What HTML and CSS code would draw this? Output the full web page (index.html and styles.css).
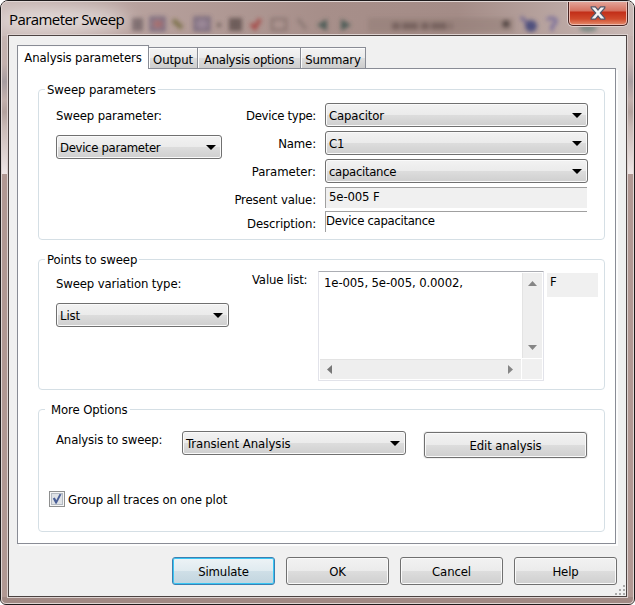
FILE: index.html
```html
<!DOCTYPE html>
<html lang="en">
<head>
<meta charset="utf-8">
<title>Parameter Sweep</title>
<link rel="stylesheet" href="styles.css">
</head>
<body>
<div class="window">
  <svg class="glass" width="633" height="603" viewBox="1 1 633 603" aria-hidden="true">
    <defs>
      <filter id="soft" x="-20%" y="-50%" width="140%" height="200%"><feGaussianBlur stdDeviation="2.300"/></filter>
      <filter id="haze" x="-50%" y="-150%" width="200%" height="400%"><feGaussianBlur stdDeviation="9"/></filter>
      <linearGradient id="bar" x1="0" x2="1" y1="0" y2="0">
        <stop offset="0" stop-color="#c9b9b6"/><stop offset=".2" stop-color="#b8a29e"/><stop offset=".5" stop-color="#a78f8a"/><stop offset=".72" stop-color="#a48c87"/><stop offset=".9" stop-color="#bca9a5"/><stop offset="1" stop-color="#c8b8b5"/>
      </linearGradient>
      <linearGradient id="side" x1="0" x2="0" y1="0" y2="1">
        <stop offset="0" stop-color="#c4b3b0"/><stop offset=".2" stop-color="#c4b1ae"/><stop offset=".33" stop-color="#a79da0"/><stop offset=".46" stop-color="#c3b1ad"/><stop offset=".55" stop-color="#b3a29e"/><stop offset=".66" stop-color="#c9bab6"/><stop offset="1" stop-color="#efe6e6"/>
      </linearGradient>
    </defs>
    <rect width="635" height="605" fill="#b19893"/>
    <rect y="36" width="10" height="138" fill="url(#side)"/>
    <rect x="625" y="36" width="10" height="138" fill="url(#side)"/>
    <rect y="597" width="635" height="8" fill="#a18984"/>
    <rect width="635" height="36" fill="url(#bar)"/>
    <ellipse cx="62" cy="20" rx="68" ry="11" fill="#fff" opacity=".6" filter="url(#haze)"/>
    <g filter="url(#soft)" opacity=".85">
      <rect x="132" y="18" width="11" height="13" fill="#5d5055" opacity=".7"/>
      <rect x="151" y="18" width="13" height="12" fill="#8a7585" stroke="#51466b" stroke-width="3" opacity=".7"/>
      <rect x="154" y="21" width="8" height="6" fill="#a36565"/>
      <path d="M173 20l9 8" stroke="#67612e" stroke-width="5" opacity=".8"/>
      <rect x="195" y="18" width="14" height="12" fill="#8a7b98" stroke="#51466b" stroke-width="3" opacity=".7"/>
      <circle cx="219" cy="25" r="2" fill="#574744"/>
      <rect x="229" y="18" width="13" height="13" fill="#564844" opacity=".85"/>
      <path d="M251 24l4 4 5-9" fill="none" stroke="#a6423f" stroke-width="4"/>
      <rect x="272" y="19" width="14" height="11" fill="none" stroke="#7d6b66" stroke-width="2"/>
      <path d="M298 19l8 10" stroke="#85736f" stroke-width="3"/>
      <path d="M317 25l10-6v12z" fill="#3f5550"/>
      <path d="M351 25l-10-6v12z" fill="#3f5550"/>
      <rect x="368" y="18" width="146" height="14" fill="#8d7771" opacity=".5"/>
      <path d="M392 26h60" stroke="#5c4b48" stroke-width="7" stroke-dasharray="8 2 16 3" opacity=".7"/>
      <circle cx="506" cy="24" r="4" fill="#4a3d3b"/>
      <path d="M521 17l8 8" stroke="#5c5590" stroke-width="3"/>
      <circle cx="531" cy="26" r="6" fill="#3d4279"/>
      <path d="M547 20q4-4 9 0q0 4-4 6v5" fill="none" stroke="#69609a" stroke-width="3"/>
      <ellipse cx="588" cy="28" rx="9" ry="4" fill="#738580"/>
    </g>
  </svg>
  <header class="titlebar">
    <h1>Parameter Sweep</h1>
    <button class="close" aria-label="Close">
      <svg width="16" height="14" viewBox="0 0 16 14"><path d="M1.200.9h4.200L8 4l2.600-3.100h4.200v1L10.300 7l4.500 5.100v1h-4.200L8 10l-2.600 3.100H1.200v-1L5.700 7 1.200 1.900z" fill="#f4f4f4" stroke="#545a6c" stroke-width="1.200"/></svg>
    </button>
  </header>
  <main class="client">
    <nav class="tabs">
      <a class="tab active"><span>Analysis parameters</span></a>
      <a class="tab output"><span>Output</span></a>
      <a class="tab options"><span class="tight">Analysis options</span></a>
      <a class="tab summary"><span>Summary</span></a>
    </nav>
    <div class="page">
      <section class="group sweep">
        <h2>Sweep parameters</h2>
        <div class="body">
          <div class="left">
            <label>Sweep parameter:</label>
            <div class="combo"><span class="tight">Device parameter</span><i></i></div>
          </div>
          <div class="fields">
            <label class="tight">Device type:</label><div class="combo"><span>Capacitor</span><i></i></div>
            <label>Name:</label><div class="combo"><span>C1</span><i></i></div>
            <label class="wide">Parameter:</label><div class="combo"><span class="tight">capacitance</span><i></i></div>
            <label>Present value:</label><div class="readout grey">5e-005 F</div>
            <label>Description:</label><div class="readout description tight">Device capacitance</div>
          </div>
        </div>
      </section>
      <section class="group points">
        <h2>Points to sweep</h2>
        <div class="body">
          <div class="left">
            <label>Sweep variation type:</label>
            <div class="combo"><span>List</span><i></i></div>
          </div>
          <label class="value-label">Value list:</label>
          <div class="editor">
            <div class="text">1e-005, 5e-005, 0.0002,</div>
            <div class="vbar">
              <svg width="9" height="5"><path d="M0 5L4.500 0 9 5z" fill="#858585"/></svg>
              <svg width="9" height="5"><path d="M0 0h9L4.500 5z" fill="#858585"/></svg>
            </div>
            <div class="hbar">
              <svg width="5" height="9"><path d="M5 0v9L0 4.500z" fill="#777"/></svg>
              <svg width="5" height="9"><path d="M0 0v9l5-4.500z" fill="#858585"/></svg>
            </div>
          </div>
          <div class="unit">F</div>
        </div>
      </section>
      <section class="group more">
        <h2>More Options</h2>
        <div class="body">
          <label>Analysis to sweep:</label>
          <div class="combo"><span class="wide">Transient Analysis</span><i></i></div>
          <button class="button edit">Edit analysis</button>
        </div>
        <label class="check">
          <svg width="16" height="16" viewBox="0 0 16 16"><rect x=".5" y=".5" width="15" height="15" fill="#f6f6f6" stroke="#8e8f8f"/><rect x="2.500" y="2.500" width="11" height="11" fill="#dfe2e6" stroke="#b4bac2"/><path d="M3.800 7.500l2-.9 1.500 2.700L10.500 3l2 .2-4.900 9.500h-1z" fill="#4a5f97"/></svg>
          <span>Group all traces on one plot</span>
        </label>
      </section>
    </div>
    <footer class="actions">
      <button class="button default">Simulate</button>
      <button class="button">OK</button>
      <button class="button">Cancel</button>
      <button class="button">Help</button>
    </footer>
    <svg class="grip" width="11" height="11" viewBox="0 0 11 11"><path d="M8 0h2v2H8zM4 4h2v2H4zM8 4h2v2H8zM0 8h2v2H0zM4 8h2v2H4zM8 8h2v2H8z" fill="#a9a9a9"/></svg>
  </main>
</div>
</body>
</html>
```
FILE: styles.css
```css
* { box-sizing: border-box; }
body {
  margin: 0;
  background: #fff;
  color: #000;
  font: 13px/16px "DejaVu Sans Condensed", "DejaVu Sans", sans-serif;
  font-stretch: condensed;
  letter-spacing: -0.13px;
  overflow: hidden;
}
h1, h2 { margin: 0; font-weight: normal; }
label, span, h2, .button { white-space: nowrap; }
.tight { letter-spacing: -0.32px; }
.wide { letter-spacing: -0.02px; }
.window {
  position: relative;
  width: 635px;
  height: 605px;
  padding: 0 7px 7px;
  border: 1px solid #1d1a1b;
  border-radius: 8px 8px 6px 6px;
  overflow: hidden;
  isolation: isolate;
}
.window::after {
  content: "";
  position: absolute;
  inset: 0;
  border: 1px solid #e0d6d4;
  border-radius: 7px 7px 5px 5px;
  pointer-events: none;
}
.glass { position: absolute; inset: 0; z-index: -1; }
.titlebar { display: flex; justify-content: space-between; height: 34px; }
h1 {
  padding: 8px 0 0 1px;
  font: 15px/20px "Open Sans", "Noto Sans", sans-serif;
  letter-spacing: -0.58px;
}
.close {
  display: flex;
  justify-content: center;
  width: 60px;
  height: 25px;
  margin-right: -1px;
  padding: 5px 0 0;
  border: 1px solid #4b2422;
  border-top: 0;
  border-radius: 0 0 5px 5px;
  box-shadow: inset 0 0 0 1px #eeb7ab, 0 0 0 1px #dccfcd;
  background: linear-gradient(#e4a99e 0, #d5705e 10px, #c22e18 11px, #d04a2c 18px, #e48e6e 100%);
}
.client {
  position: relative;
  height: 562px;
  padding: 9px 8px 0;
  border: 1px solid #4c4342;
  background: #f0f0f0;
  box-shadow: 0 0 0 1px #ddd2d0;
}
.tabs { display: flex; align-items: flex-end; height: 24px; }
.tab {
  display: flex;
  justify-content: center;
  height: 22px;
  padding-top: 4px;
  border: 1px solid #898c95;
  border-left: 0;
  background: linear-gradient(#f3f3f3, #ebebeb 50%, #dddddd 51%, #cdcdcd);
  box-shadow: inset 1px 1px #fcfcfc;
}
.tab.active {
  position: relative;
  width: 132px;
  height: 24px;
  border-left: 1px solid #898c95;
  border-bottom: 0;
  background: #fff;
}
.output { width: 49px; }
.options { width: 103px; }
.summary { width: 65px; }
.page {
  width: 599px;
  height: 476px;
  margin-top: -1px;
  padding: 20px 10px 0 20px;
  border: 1px solid #898c95;
  background: #fff;
  box-shadow: 2px 2px #fcfcfc;
}
.group { border: 1px solid #d5dfe5; border-radius: 4px; }
.group h2 {
  width: max-content;
  height: 16px;
  margin: -8px 0 0 6px;
  padding: 0 2px;
  background: #fff;
  font-size: 13px;
  letter-spacing: -0.1px;
}
.sweep { height: 151px; }
.points { height: 131px; margin-top: 19px; }
.more { height: 123px; margin-top: 19px; }
.more h2 { padding-left: 6px; }
.body { display: flex; align-items: flex-start; padding-left: 17px; }
.left { display: flex; flex-direction: column; gap: 11px; }
.combo {
  display: flex;
  align-items: center;
  justify-content: space-between;
  height: 24px;
  padding: 0 5px 0 3px;
  border: 1px solid #707070;
  border-radius: 3px;
  background: linear-gradient(#f2f2f2, #ebebeb 48%, #dddddd 50%, #cfcfcf);
  box-shadow: inset 0 0 0 1px #fafafa;
}
.combo span { padding-top: 1px; }
.combo i { border: solid transparent; border-width: 5px 5px 0; border-top-color: #000; }
.sweep .left { width: 166px; padding-top: 10px; }
.fields {
  display: grid;
  grid-template-columns: 82px 263px;
  grid-template-rows: 24px 24px 24px 20px 21px;
  gap: 4px 9px;
  margin: 5px 0 0 12px;
}
.fields label { justify-self: end; padding-top: 5px; }
.readout {
  width: 262px;
  height: 21px;
  padding: 1px 0 0 3px;
  border: solid #a0a0a0;
  border-width: 1px 0 0 1px;
}
.description { padding-left: 0; }
.grey { background: #f0f0f0; }
.points .body { padding-top: 3px; }
.points .left { width: 173px; padding-top: 5px; }
.value-label { width: 66px; margin-left: 23px; padding-top: 1px; }
.editor {
  display: grid;
  grid-template: 86px 20px / 202px 20px;
  width: 226px;
  height: 110px;
  padding: 1px;
  border: 1px solid #e2e3ea;
  border-top-color: #abadb3;
  border-radius: 1px;
  background: linear-gradient(#f0f0f0, #f0f0f0) 203px 87px / 20px 20px no-repeat;
}
.text { padding: 2px 0 0 4px; white-space: nowrap; }
.vbar, .hbar { display: flex; justify-content: space-between; align-items: center; background: #eee; }
.vbar { flex-direction: column; height: 85px; padding: 8px 0 8px; border-left: 1px solid #e3e3e3; }
.hbar { width: 201px; padding: 0 8px 0 7px; border-top: 1px solid #e3e3e3; }
.unit { width: 51px; height: 24px; margin: 2px 0 0 3px; padding: 1px 3px; background: #f0f0f0; }
.more .body { padding-top: 13px; }
.more .body label { width: 126px; padding-top: 1px; }
.more .combo { width: 224px; }
.button {
  height: 28px;
  padding: 2px 0 0;
  border: 1px solid #707070;
  border-radius: 3px;
  background: linear-gradient(#f2f2f2, #ebebeb 48%, #dddddd 50%, #cfcfcf);
  box-shadow: inset 0 0 0 1px #fafafa;
  color: #000;
  font: inherit;
  letter-spacing: inherit;
  text-align: center;
}
.edit { width: 163px; height: 26px; margin: 1px 0 0 18px; box-shadow: inset 0 0 0 1px #fafafa, 0 0 0 1px #f0f0f0; }
.check { display: flex; gap: 3px; margin: 33px 0 0 10px; }
.check span { padding-top: 1px; }
.actions { display: flex; gap: 11px; padding: 13px 0 0 155px; }
.actions .button { width: 103px; }
.default {
  border-color: #3c7fb1;
  background: linear-gradient(#edf3f6, #e0ebf0 48%, #cfdfe7 50%, #c2d5df);
  box-shadow: inset 0 0 0 1px #39c6f4;
}
.grip { position: absolute; right: 0; bottom: 0; }
```
